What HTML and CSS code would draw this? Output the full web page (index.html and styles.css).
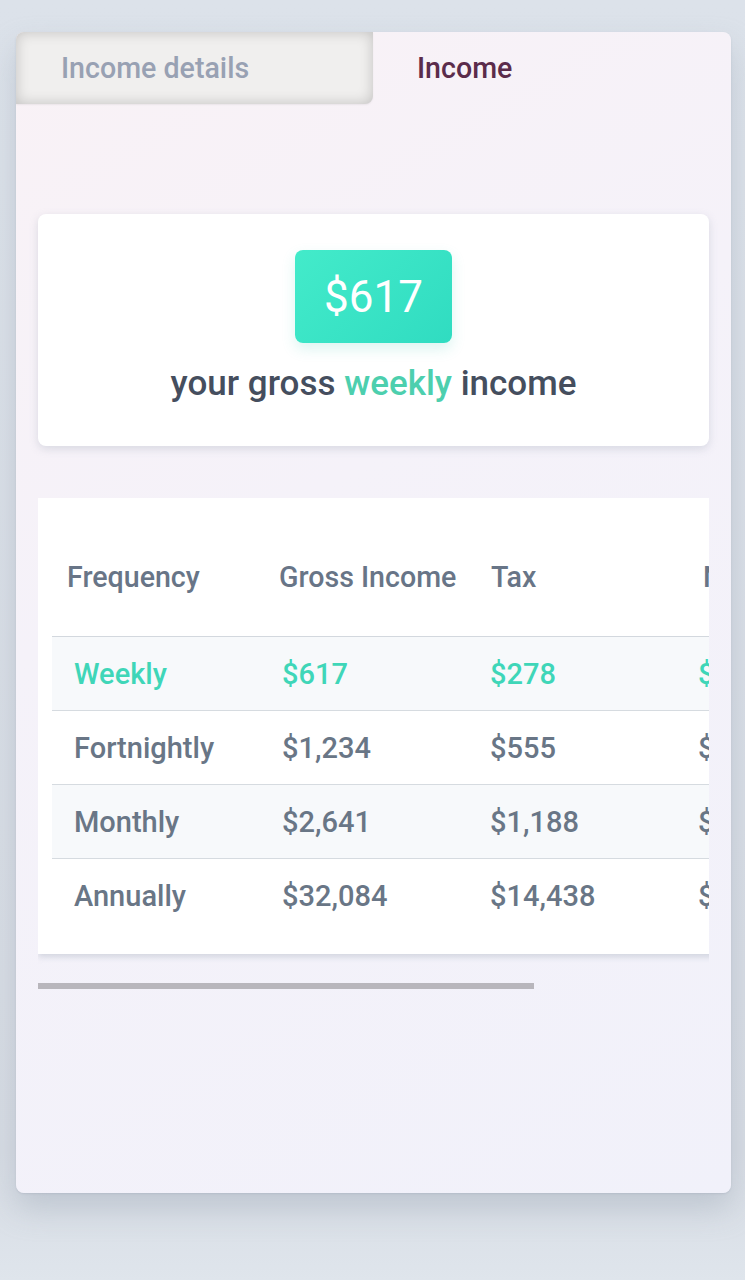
FILE: index.html
```html
<!DOCTYPE html>
<html>
<head>
<meta charset="utf-8">
<link rel="stylesheet" href="styles.css">
</head>
<body>
<div class="panel">
  <div class="tabs">
    <div class="tab tab-inactive">Income details</div>
    <div class="tab tab-active">Income</div>
  </div>
  <div class="content">
    <div class="summary">
      <div class="badge">$617</div>
      <div class="caption">your gross <span class="accent">weekly</span> income</div>
    </div>
    <div class="scroller">
      <div class="tablecard">
        <div class="thead">
          <div class="th">Frequency</div><div class="th">Gross Income</div><div class="th">Tax</div><div class="th">Net Income</div>
        </div>
        <div class="row striped active">
          <div class="td">Weekly</div><div class="td">$617</div><div class="td">$278</div><div class="td">$339</div>
        </div>
        <div class="row">
          <div class="td">Fortnightly</div><div class="td">$1,234</div><div class="td">$555</div><div class="td">$679</div>
        </div>
        <div class="row striped">
          <div class="td">Monthly</div><div class="td">$2,641</div><div class="td">$1,188</div><div class="td">$1,453</div>
        </div>
        <div class="row last">
          <div class="td">Annually</div><div class="td">$32,084</div><div class="td">$14,438</div><div class="td">$17,646</div>
        </div>
      </div>
    </div>
    <div class="scrollbar"><div class="thumb"></div></div>
  </div>
</div>
</body>
</html>
```
FILE: styles.css
```css
html, body {
  margin: 0;
  padding: 0;
}
body {
  width: 745px;
  height: 1280px;
  background: linear-gradient(180deg, #dce2ea 0%, #d6dbe3 90%, #dfe5ec 100%);
  font-family: Roboto, "Noto Sans", sans-serif;
  padding: 32px 14px 0 16px;
  box-sizing: border-box;
  overflow: hidden;
}
.panel {
  width: 715px;
  height: 1161px;
  border-radius: 8px;
  background: linear-gradient(150deg, #f9f2f6 0%, #f5f2f9 40%, #f1f1fa 100%);
  box-shadow: 0 16px 30px rgba(160, 170, 185, 0.45), 0 1px 2px rgba(160, 170, 185, 0.4);
  overflow: hidden;
}
.tabs {
  display: flex;
  height: 72px;
}
.tab {
  font-size: 28.6px;
  font-weight: 500;
  display: flex;
  align-items: center;
}
.tab-inactive {
  width: 357px;
  padding-left: 45px;
  box-sizing: border-box;
  background: #f0efee;
  color: #98a1b3;
  border-bottom-right-radius: 8px;
  box-shadow: inset 0 0 14px rgba(0, 0, 0, 0.2), 0 1px 2px rgba(0,0,0,0.06);
}
.tab-active {
  padding-left: 44px;
  color: #5b2c4b;
}
.content {
  padding: 110px 22px 0 22px;
}
.summary {
  background: #fff;
  border-radius: 8px;
  height: 232px;
  box-shadow: 0 3px 8px rgba(150, 160, 175, 0.3);
  display: flex;
  flex-direction: column;
  align-items: center;
  padding-top: 36px;
  box-sizing: border-box;
}
.badge {
  width: 157px;
  height: 93px;
  border-radius: 8px;
  background: linear-gradient(135deg, #43ebca 0%, #30dcc1 100%);
  color: #fff;
  font-size: 44px;
  display: flex;
  align-items: center;
  justify-content: center;
  box-shadow: 0 6px 14px rgba(60, 200, 180, 0.18);
}
.caption {
  margin-top: 20px;
  font-size: 35px;
  font-weight: 500;
  color: #454e5e;
}
.accent {
  color: #4dcfae;
}
.scroller {
  margin-top: 52px;
  overflow: hidden;
  padding-bottom: 14px;
}
.tablecard {
  width: 908px;
  background: #fff;
  box-shadow: 0 3px 6px rgba(150, 160, 175, 0.35);
  padding: 0 14px 21px 14px;
  box-sizing: border-box;
}
.thead {
  display: grid;
  grid-template-columns: repeat(4, 212px);
  height: 139px;
  box-sizing: border-box;
  padding-top: 20px;
  align-items: center;
  border-bottom: 1px solid #d3d8de;
}
.th {
  font-size: 28.6px;
  font-weight: 500;
  color: #687587;
  padding-left: 15px;
  white-space: nowrap;
}
.row {
  display: grid;
  grid-template-columns: repeat(4, 208px);
  height: 74px;
  box-sizing: border-box;
  align-items: center;
  border-bottom: 1px solid #d6dbe0;
}
.row.last {
  border-bottom: none;
}
.row.striped {
  background: #f7f9fb;
}
.td {
  font-size: 29px;
  font-weight: 500;
  color: #697686;
  padding-left: 22px;
  white-space: nowrap;
}
.row.active .td {
  color: #3fd6b8;
}
.scrollbar {
  margin-top: 15px;
  height: 6px;
  width: 671px;
}
.thumb {
  width: 496px;
  height: 6px;
  background: #b8b6bc;
}
```
